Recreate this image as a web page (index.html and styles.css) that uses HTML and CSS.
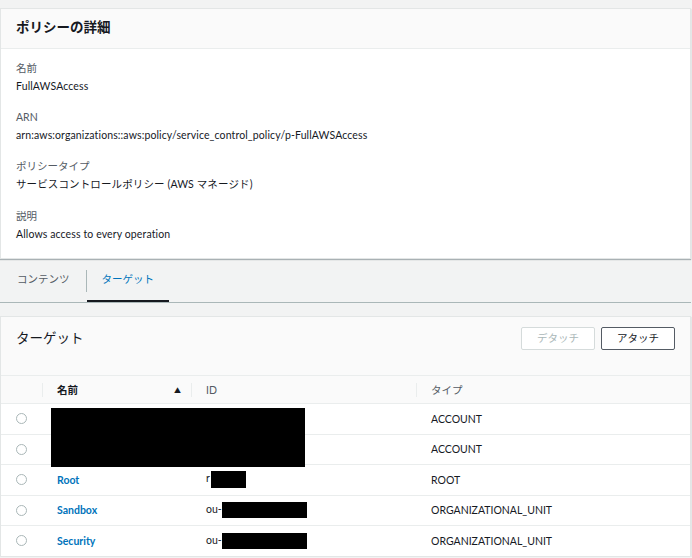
FILE: index.html
```html
<!DOCTYPE html>
<html lang="ja">
<head>
<meta charset="utf-8">
<title>ポリシーの詳細</title>
<link rel="stylesheet" href="styles.css">
</head>
<body>
<div class="page">
  <section class="panel details">
    <header class="panel-head">
      <h2 class="panel-title">ポリシーの詳細</h2>
    </header>
    <div class="panel-body">
      <div class="field">
        <div class="label">名前</div>
        <div class="value">FullAWSAccess</div>
      </div>
      <div class="field">
        <div class="label">ARN</div>
        <div class="value">arn:aws:organizations::aws:policy/service_control_policy/p-FullAWSAccess</div>
      </div>
      <div class="field">
        <div class="label">ポリシータイプ</div>
        <div class="value">サービスコントロールポリシー (AWS マネージド)</div>
      </div>
      <div class="field">
        <div class="label">説明</div>
        <div class="value">Allows access to every operation</div>
      </div>
    </div>
  </section>

  <nav class="tabs">
    <a class="tab">コンテンツ</a>
    <span class="tab-divider"></span>
    <a class="tab active">ターゲット</a>
  </nav>

  <section class="panel targets">
    <header class="panel-head targets-head">
      <h2 class="panel-title light">ターゲット</h2>
      <div class="actions">
        <button class="btn" disabled>デタッチ</button>
        <button class="btn">アタッチ</button>
      </div>
    </header>
    <div class="table-wrap">
      <table class="grid">
        <colgroup>
          <col class="c-sel"><col class="c-name"><col class="c-id"><col class="c-type">
        </colgroup>
        <thead>
          <tr>
            <th></th>
            <th class="sorted"><span class="th-in"><span>名前</span><span class="sort">▲</span></span></th>
            <th>ID</th>
            <th>タイプ</th>
          </tr>
        </thead>
        <tbody>
          <tr><td><span class="radio"></span></td><td></td><td></td><td>ACCOUNT</td></tr>
          <tr><td><span class="radio"></span></td><td></td><td></td><td>ACCOUNT</td></tr>
          <tr><td><span class="radio"></span></td><td><a class="link">Root</a></td><td>r<span class="redact r-root"></span></td><td>ROOT</td></tr>
          <tr><td><span class="radio"></span></td><td><a class="link">Sandbox</a></td><td>ou-<span class="redact r-ou"></span></td><td>ORGANIZATIONAL_UNIT</td></tr>
          <tr><td><span class="radio"></span></td><td><a class="link">Security</a></td><td>ou-<span class="redact r-ou"></span></td><td>ORGANIZATIONAL_UNIT</td></tr>
        </tbody>
      </table>
      <span class="redact redact-big"></span>
    </div>
  </section>
</div>
</body>
</html>
```

FILE: styles.css
```css
html, body {
  margin: 0;
  padding: 0;
  background: #f2f3f3;
}

body {
  font-family: Lato, "Noto Sans CJK JP", sans-serif;
  font-size: 10.5px;
  color: #16191f;
}

.page {
  padding: 8px 1px 0 0;
}

.panel {
  background: #ffffff;
  border: 1px solid #e3e6e6;
  box-shadow: 0 1px 1px 0 rgba(0, 28, 36, 0.3);
}

.panel-head {
  background: #fafafa;
  border-bottom: 1px solid #eaeded;
  height: 39px;
  padding: 0 15px;
  display: flex;
  align-items: center;
}

.panel-title {
  margin: 0;
  font-size: 13.5px;
  font-weight: bold;
  line-height: 23px;
  color: #16191f;
}

.details .panel-title {
  margin-top: -2px;
}

.panel-title.light {
  font-weight: normal;
}

.panel-body {
  padding: 10px 15px 15px;
}

.field + .field {
  margin-top: 13px;
}

.field:last-child {
  margin-top: 14px;
}

.label {
  color: #545b64;
  line-height: 18px;
}

.value {
  color: #16191f;
  line-height: 18px;
  letter-spacing: 0.12px;
}

/* tabs */
.tabs {
  display: flex;
  align-items: stretch;
  height: 42px;
  border-bottom: 1px solid #aab7b8;
  padding-left: 1px;
  margin-top: 1px;
}

.tab {
  box-sizing: border-box;
  height: 42px;
  line-height: 38px;
  padding: 0 16px;
  border-bottom: 2px solid transparent;
  color: #545b64;
  cursor: pointer;
}

.tab.active {
  color: #0073bb;
  border-bottom-color: #16191f;
  padding: 0 15px;
}

.tab-divider {
  width: 1px;
  height: 22px;
  align-self: flex-start;
  margin-top: 10px;
  background: #aab7b8;
}

/* targets panel */
.targets {
  margin-top: 13px;
}

.targets-head {
  height: 48px;
  align-items: flex-start;
  justify-content: space-between;
  padding: 10px 15px 0 15px;
}

.actions {
  display: flex;
  gap: 6px;
}

.btn {
  box-sizing: border-box;
  width: 74px;
  height: 23px;
  padding: 0;
  text-align: center;
  background: #ffffff;
  border: 1px solid #545b64;
  border-radius: 2px;
  font: inherit;
  font-size: 10.5px;
  color: #16191f;
  line-height: 21px;
}

.btn:disabled {
  border-color: #d5dbdb;
  color: #aab7b8;
}

.table-wrap {
  position: relative;
}

.grid {
  width: 100%;
  border-collapse: collapse;
  table-layout: fixed;
}

.c-sel { width: 41px; }
.c-name { width: 149px; }
.c-id { width: 225px; }

.grid th {
  position: relative;
  background: #fafafa;
  height: 27px;
  padding: 0 0 0 15px;
  text-align: left;
  font-weight: normal;
  color: #545b64;
  border-bottom: 1px solid #eaeded;
}

.grid th + th::before {
  content: "";
  position: absolute;
  left: 0;
  top: 7px;
  width: 1px;
  height: 14px;
  background: #eaeded;
}

.grid th.sorted {
  color: #16191f;
  font-weight: bold;
  padding-right: 10px;
}

.th-in {
  display: flex;
  justify-content: space-between;
  align-items: center;
}

.sort {
  font-size: 7px;
  color: #16191f;
}

.grid td {
  height: 29.5px;
  padding: 0 0 0 15px;
  border-bottom: 1px solid #eaeded;
  color: #16191f;
  white-space: nowrap;
}

.grid tbody tr:last-child td {
  border-bottom: none;
}

.radio {
  display: block;
  box-sizing: border-box;
  width: 11px;
  height: 11px;
  border: 1px solid #aab7b8;
  border-radius: 50%;
  background: #fff;
}

.link {
  color: #0073bb;
  font-weight: bold;
  cursor: pointer;
}

.redact {
  display: inline-block;
  background: #000;
  vertical-align: middle;
}

.r-root {
  width: 35px;
  height: 17px;
  margin-left: 1px;
}

.r-ou {
  width: 85px;
  height: 16px;
}

.redact-big {
  position: absolute;
  left: 50px;
  top: 32px;
  width: 254px;
  height: 59px;
}
```
